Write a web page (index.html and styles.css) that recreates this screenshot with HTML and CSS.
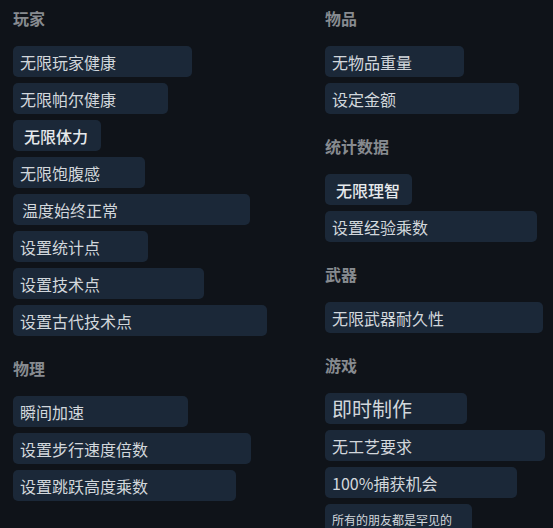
FILE: index.html
```html
<!DOCTYPE html>
<html lang="zh-CN">
<head>
  <meta charset="UTF-8" />
  <meta name="viewport" content="width=device-width, initial-scale=1.0"/>
  <title>作弊菜单</title>
  <link rel="stylesheet" href="styles.css">
</head>
<body>
  <div class="columns">
    <div class="col">
      <div class="group">
        <h2>玩家</h2>
        <div class="list">
          <button class="opt w179">无限玩家健康</button>
          <button class="opt w155">无限帕尔健康</button>
          <button class="opt on w88">无限体力</button>
          <button class="opt w132">无限饱腹感</button>
          <button class="opt wide-pad w237">温度始终正常</button>
          <button class="opt w135">设置统计点</button>
          <button class="opt w191">设置技术点</button>
          <button class="opt w254">设置古代技术点</button>
        </div>
      </div>

      <div class="group">
        <h2>物理</h2>
        <div class="list">
          <button class="opt w175">瞬间加速</button>
          <button class="opt w238">设置步行速度倍数</button>
          <button class="opt w223">设置跳跃高度乘数</button>
        </div>
      </div>
    </div>

    <div class="col">
      <div class="group">
        <h2>物品</h2>
        <div class="list">
          <button class="opt w139">无物品重量</button>
          <button class="opt w194">设定金额</button>
        </div>
      </div>

      <div class="group">
        <h2>统计数据</h2>
        <div class="list">
          <button class="opt on w87">无限理智</button>
          <button class="opt w212">设置经验乘数</button>
        </div>
      </div>

      <div class="group">
        <h2>武器</h2>
        <div class="list">
          <button class="opt w218">无限武器耐久性</button>
        </div>
      </div>

      <div class="group">
        <h2>游戏</h2>
        <div class="list">
          <button class="opt big w142">即时制作</button>
          <button class="opt w220">无工艺要求</button>
          <button class="opt w192">100%捕获机会</button>
          <button class="opt small w147">所有的朋友都是罕见的</button>
        </div>
      </div>
    </div>
  </div>
</body>
</html>
```

FILE: styles.css
```css
body {
  margin: 0;
  padding: 7px 0 0 13px;
  background-color: #0f1319;
  font-family: "Noto Sans CJK SC", "Noto Sans", sans-serif;
  overflow: hidden;
}
.columns {
  display: grid;
  grid-template-columns: 312px 1fr;
}
.col {
  display: flex;
  flex-direction: column;
  gap: 21px;
}
h2 {
  margin: 0 0 17px;
  font-size: 16px;
  line-height: 22px;
  font-weight: 700;
  color: #878b90;
}
.list {
  display: flex;
  flex-direction: column;
  align-items: flex-start;
  gap: 6px;
}
.opt {
  display: flex;
  align-items: center;
  height: 31px;
  padding: 0 0 0 7px;
  background: #1b2838;
  color: #d2d7dc;
  border: none;
  border-radius: 5px;
  font-family: inherit;
  font-size: 16px;
  white-space: nowrap;
}
.opt.on {
  padding-left: 11px;
  color: #e6e9ec;
  font-weight: 500;
}
.opt.wide-pad {
  padding-left: 9px;
}
.opt.big {
  font-size: 20px;
}
.opt.small {
  font-size: 12px;
}

.w87 { width: 87px; }
.w88 { width: 88px; }
.w132 { width: 132px; }
.w135 { width: 135px; }
.w139 { width: 139px; }
.w142 { width: 142px; }
.w147 { width: 147px; }
.w155 { width: 155px; }
.w175 { width: 175px; }
.w179 { width: 179px; }
.w191 { width: 191px; }
.w192 { width: 192px; }
.w194 { width: 194px; }
.w212 { width: 212px; }
.w218 { width: 218px; }
.w220 { width: 220px; }
.w223 { width: 223px; }
.w237 { width: 237px; }
.w238 { width: 238px; }
.w254 { width: 254px; }
```
